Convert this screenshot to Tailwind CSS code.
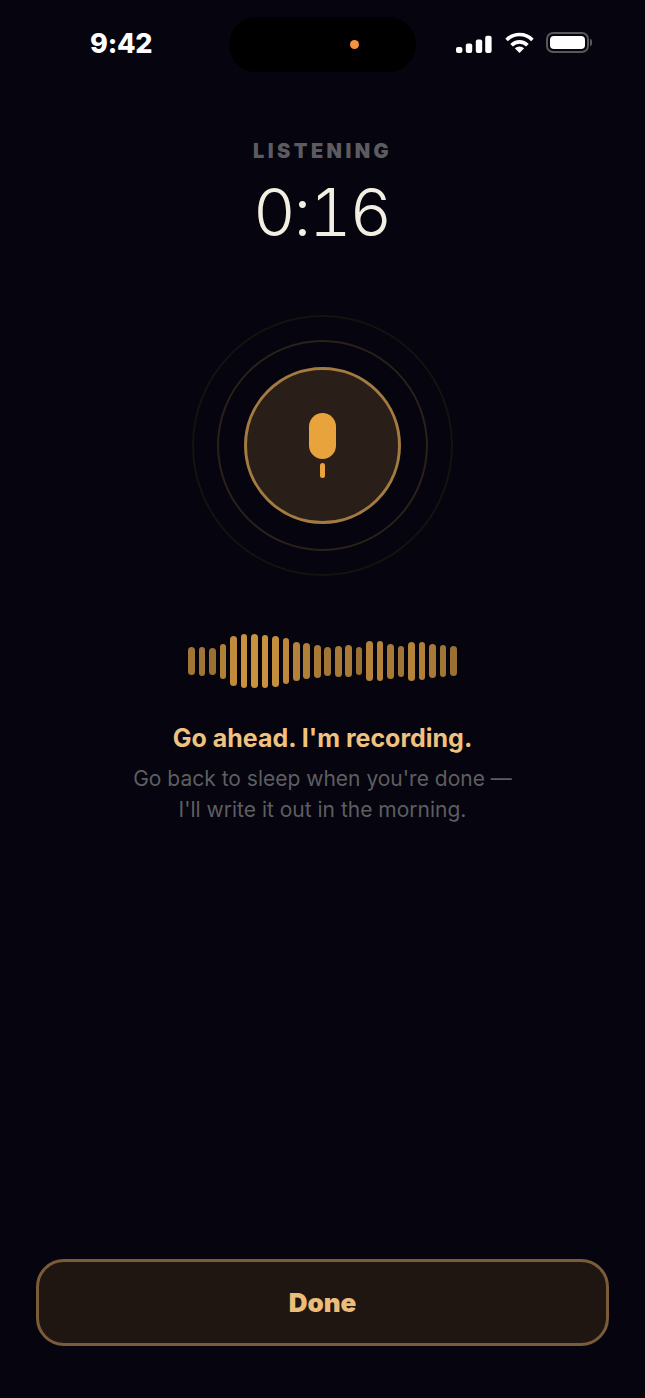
<!DOCTYPE html>
<html>
  <head>
    <title>Listening</title>
    <meta charset="utf-8" />
    <script src="https://cdn.jsdelivr.net/npm/@tailwindcss/browser@4"></script>
  </head>
  <body class="bg-[#05040f]">
    <div class="flex h-[1398px] w-[645px] flex-col items-center overflow-hidden bg-[#05040f] font-['Inter',sans-serif]">
      <!-- status bar -->
      <div class="flex h-[55px] w-full shrink-0 items-start pt-[17px]">
        <div class="ml-[90px] w-[139px] pt-[10px] text-[27px] leading-[34px] font-extrabold tracking-[-0.2px] text-white">9:42</div>
        <div class="flex h-[55px] w-[187px] items-center justify-end rounded-[28px] bg-black pr-[57px]">
          <div class="h-[9px] w-[9px] rounded-full bg-[#f5923e]"></div>
        </div>
        <div class="ml-[40px] flex items-start pt-[15px]">
          <svg class="h-[22px] w-[36px]" viewBox="0 0 36 22" fill="#fff">
            <rect x="0" y="15" width="6.4" height="6" rx="2" />
            <rect x="9.8" y="11.4" width="6.4" height="9.6" rx="2" />
            <rect x="19.8" y="7.4" width="6.4" height="13.6" rx="2" />
            <rect x="29.2" y="3.8" width="6.4" height="17.2" rx="2" />
          </svg>
          <svg class="ml-[13px] h-[22px] w-[29px]" viewBox="0 0 29 22" fill="none" stroke="#fff" stroke-width="3.6">
            <path d="M1.6 8 A18 18 0 0 1 27.4 8" />
            <path d="M6.6 13.2 A11 11 0 0 1 22.4 13.2" />
            <path d="M9.8 16.2 A7 7 0 0 1 19.2 16.2 L14.5 21 Z" fill="#fff" stroke="none" />
          </svg>
          <div class="ml-[12px] flex items-center">
            <div class="h-[21px] w-[43px] rounded-[7px] border-[2px] border-[#58585c] p-[2px]">
              <div class="h-full w-full rounded-[4px] bg-white"></div>
            </div>
            <div class="ml-[1px] h-[7px] w-[2px] rounded-r-full bg-[#58585c]"></div>
          </div>
        </div>
      </div>

      <!-- timer -->
      <div class="mt-[84px] text-[20px] leading-[24px] font-black tracking-[3.45px] text-[#5c5c60]">LISTENING</div>
      <div class="mt-[12px] pr-[2px] text-[66px] leading-[74px] font-[265] tracking-[-2.2px] text-[#f3eee2] tabular-nums">0:16</div>

      <!-- mic with rings -->
      <div class="mt-[66px] flex h-[261px] w-[261px] items-center justify-center rounded-full border-[2px] border-[#15120f]">
        <div class="flex h-[211px] w-[211px] items-center justify-center rounded-full border-[2px] border-[#2a2218]">
          <div class="flex h-[157px] w-[157px] flex-col items-center justify-center rounded-full border-[3px] border-[#a37a40] bg-[#2a1f18]">
            <div class="h-[46px] w-[27px] rounded-full bg-[#e8a33d]"></div>
            <div class="mt-[4px] h-[15px] w-[5px] rounded-full bg-[#e8a33d]"></div>
          </div>
        </div>
      </div>

      <!-- waveform -->
      <div class="mt-[58px] flex h-[54px] items-center gap-[3.9px]">
        <div class="h-[28px] w-[6.6px] rounded-full bg-[#a07535]"></div>
        <div class="h-[29px] w-[6.6px] rounded-full bg-[#a07535]"></div>
        <div class="h-[27px] w-[6.6px] rounded-full bg-[#9a7033]"></div>
        <div class="h-[35px] w-[6.6px] rounded-full bg-[#b08037]"></div>
        <div class="h-[50px] w-[6.6px] rounded-full bg-[#c08c3c]"></div>
        <div class="h-[54px] w-[6.6px] rounded-full bg-[#c8923e]"></div>
        <div class="h-[54px] w-[6.6px] rounded-full bg-[#c8923e]"></div>
        <div class="h-[53px] w-[6.6px] rounded-full bg-[#c8923e]"></div>
        <div class="h-[51px] w-[6.6px] rounded-full bg-[#c48f3d]"></div>
        <div class="h-[46px] w-[6.6px] rounded-full bg-[#bc893b]"></div>
        <div class="h-[39px] w-[6.6px] rounded-full bg-[#b48339]"></div>
        <div class="h-[36px] w-[6.6px] rounded-full bg-[#b08037]"></div>
        <div class="h-[33px] w-[6.6px] rounded-full bg-[#a87a36]"></div>
        <div class="h-[29px] w-[6.6px] rounded-full bg-[#a07535]"></div>
        <div class="h-[31px] w-[6.6px] rounded-full bg-[#a87a36]"></div>
        <div class="h-[32px] w-[6.6px] rounded-full bg-[#a87a36]"></div>
        <div class="h-[28px] w-[6.6px] rounded-full bg-[#9a7033]"></div>
        <div class="h-[40px] w-[6.6px] rounded-full bg-[#b48339]"></div>
        <div class="h-[40px] w-[6.6px] rounded-full bg-[#b48339]"></div>
        <div class="h-[35px] w-[6.6px] rounded-full bg-[#a87a36]"></div>
        <div class="h-[31px] w-[6.6px] rounded-full bg-[#a07535]"></div>
        <div class="h-[39px] w-[6.6px] rounded-full bg-[#b48339]"></div>
        <div class="h-[38px] w-[6.6px] rounded-full bg-[#b08037]"></div>
        <div class="h-[34px] w-[6.6px] rounded-full bg-[#a87a36]"></div>
        <div class="h-[32px] w-[6.6px] rounded-full bg-[#a07535]"></div>
        <div class="h-[30px] w-[6.6px] rounded-full bg-[#9a7033]"></div>
      </div>

      <!-- copy -->
      <div class="mt-[34px] text-[25px] leading-[32px] font-[750] text-[#f0c27f]">Go ahead. I'm recording.</div>
      <div class="mt-[9px] text-center text-[21px] leading-[31px] text-[#5e5e60]">
        <p>Go back to sleep when you're done —</p>
        <p>I'll write it out in the morning.</p>
      </div>

      <!-- done button -->
      <button class="mt-auto mb-[52px] h-[87px] w-[573px] rounded-[28px] border-[3px] border-[#7a5c38] bg-[#1f1612] text-[26px] font-black text-[#ecbd7a]">Done</button>
    </div>
  </body>
</html>
